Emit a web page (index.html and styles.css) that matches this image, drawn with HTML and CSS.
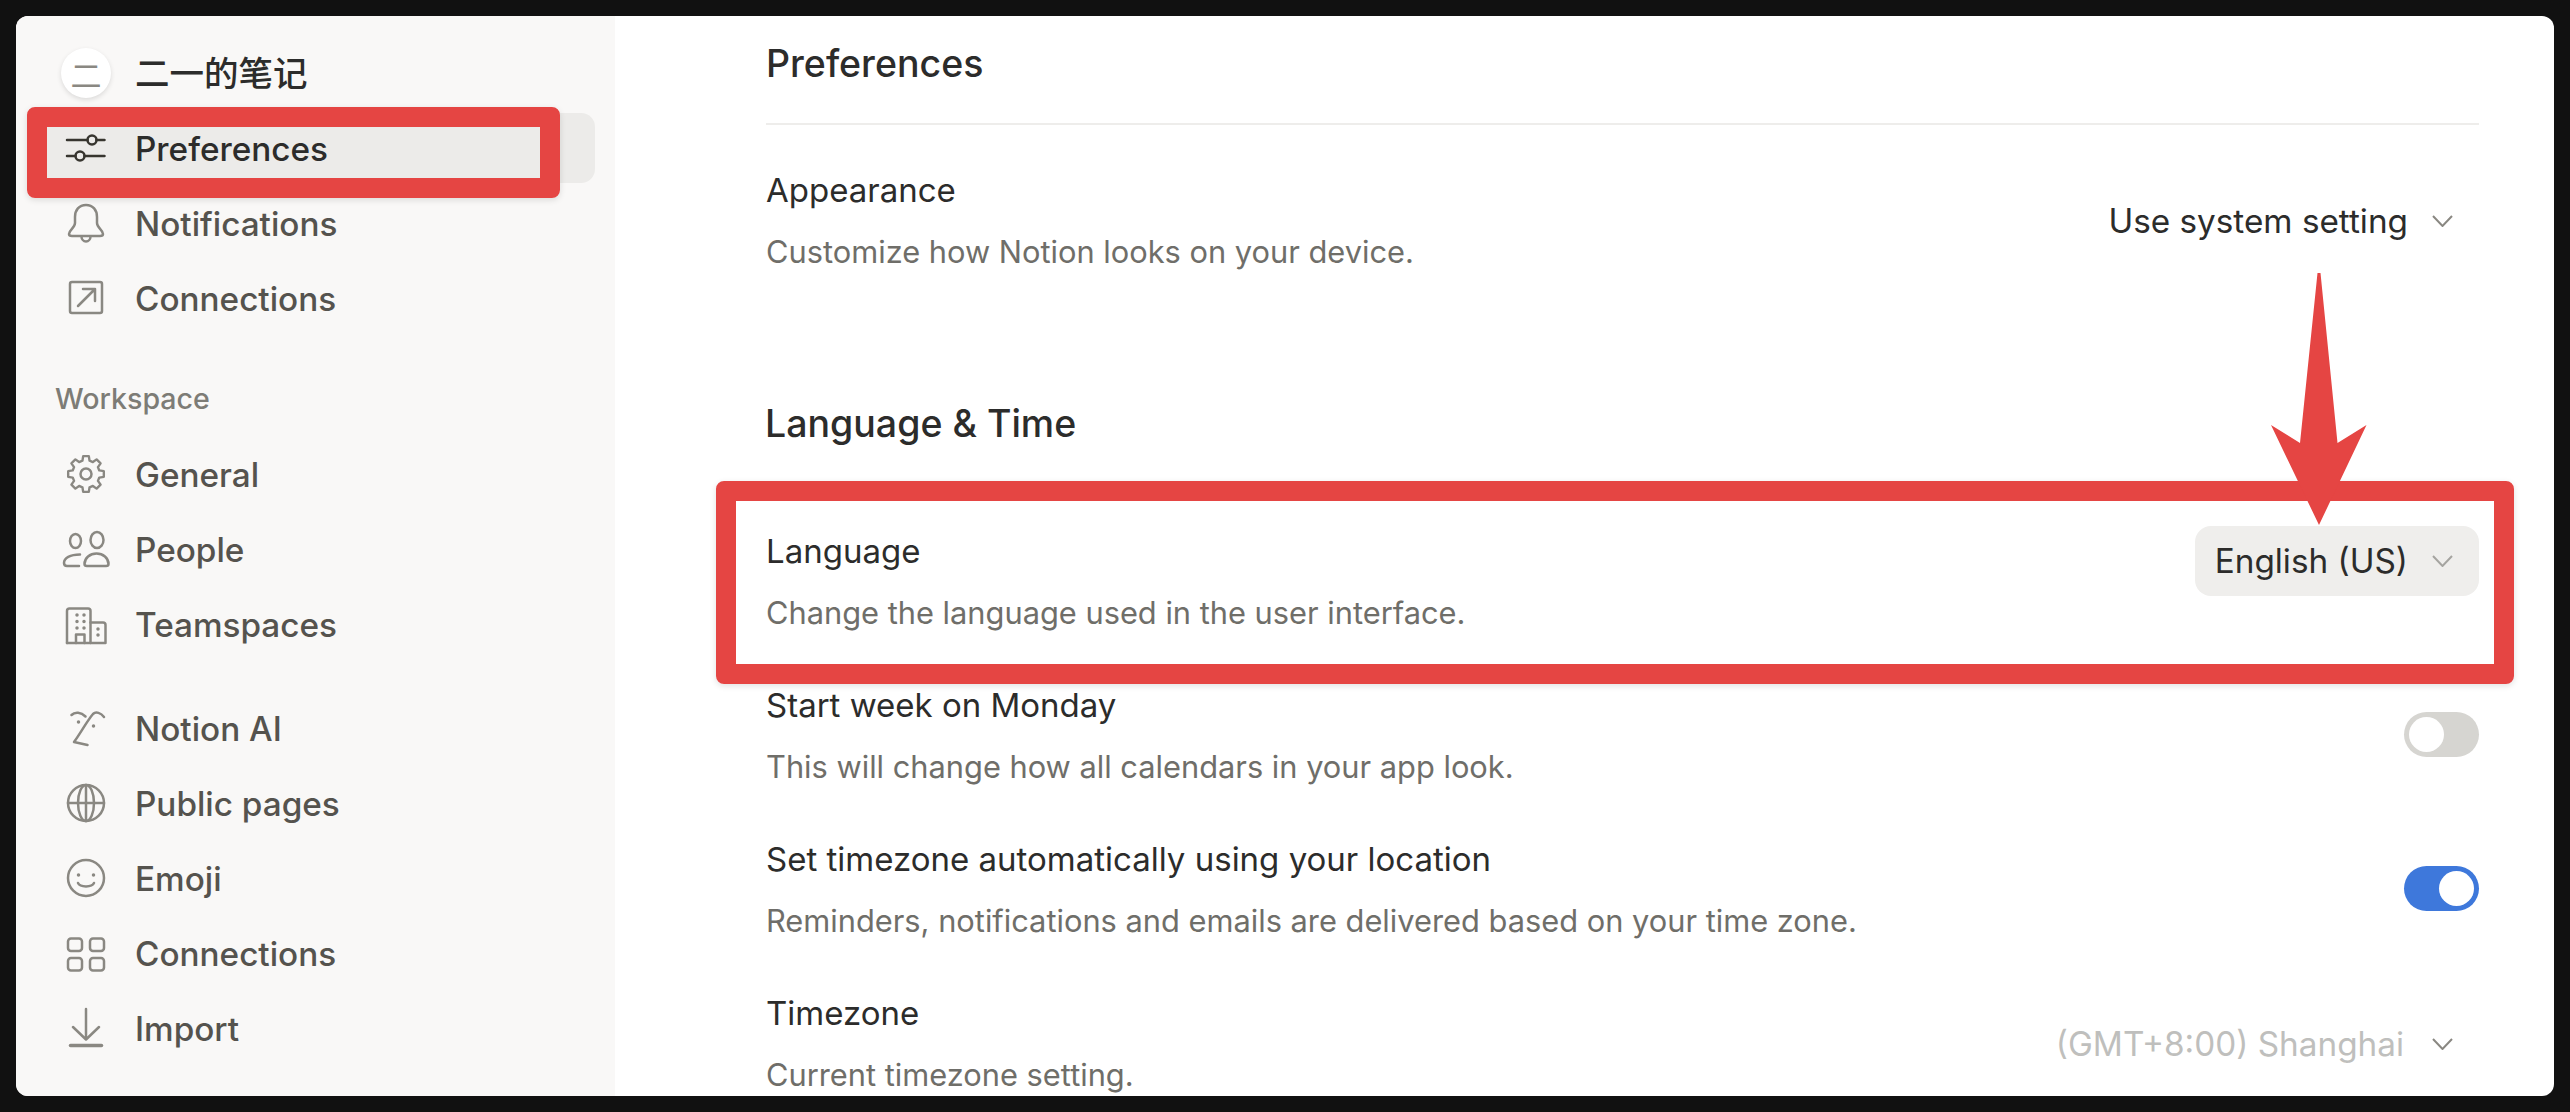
FILE: index.html
```html
<!DOCTYPE html>
<html lang="en">
<head>
    <meta charset="UTF-8">
    <meta name="viewport" content="width=device-width, initial-scale=1.0">
    <title>Settings</title>
    <link rel="stylesheet" href="styles.css">
</head>
<body>
    <div class="window">
        <div class="sidebar">
            <div class="nav-row workspace-row">
                <div class="nav-icon"><span class="avatar">二</span></div>
                <span class="workspace-name">二一的笔记</span>
            </div>

            <div class="nav-row active">
                <div class="nav-icon">
                    <svg viewBox="0 0 52 52"><path d="M7 18H27.5M36.5 18H44.5M7 34H15.5M24.5 34H44.5"/><circle cx="32" cy="18" r="4.5"/><circle cx="20" cy="34" r="4.5"/></svg>
                </div>
                <span>Preferences</span>
            </div>
            <div class="nav-row">
                <div class="nav-icon">
                    <svg viewBox="0 0 52 52"><path d="M26 8C19 8 15 13 15 20V26C15 31 9 33 9 37C9 38.5 10 39 12 39H40C42 39 43 38.5 43 37C43 33 37 31 37 26V20C37 13 33 8 26 8Z"/><path d="M21.5 39.5A4.5 5 0 0 0 30.5 39.5"/></svg>
                </div>
                <span>Notifications</span>
            </div>
            <div class="nav-row">
                <div class="nav-icon">
                    <svg viewBox="0 0 52 52"><rect x="10" y="10" width="32" height="31" rx="2"/><path d="M18 34L35 17M23 17H35V29"/></svg>
                </div>
                <span>Connections</span>
            </div>

            <div class="nav-label">Workspace</div>

            <div class="nav-row">
                <div class="nav-icon">
                    <svg viewBox="0 0 52 52"><polygon transform="translate(26 26) scale(.95)" points="-2.97,-18.77 2.97,-18.77 3.75,-14 7.25,-12.56 11.17,-15.37 15.37,-11.17 12.56,-7.25 14,-3.75 18.77,-2.97 18.77,2.97 14,3.75 12.56,7.25 15.37,11.17 11.17,15.37 7.25,12.56 3.75,14 2.97,18.77 -2.97,18.77 -3.75,14 -7.25,12.56 -11.17,15.37 -15.37,11.17 -12.56,7.25 -14,3.75 -18.77,2.97 -18.77,-2.97 -14,-3.75 -12.56,-7.25 -15.37,-11.17 -11.17,-15.37 -7.25,-12.56 -3.75,-14"/><circle cx="26" cy="26" r="5.5"/></svg>
                </div>
                <span>General</span>
            </div>
            <div class="nav-row">
                <div class="nav-icon">
                    <svg viewBox="0 0 52 52"><ellipse cx="15.5" cy="18" rx="5.5" ry="7"/><ellipse cx="37" cy="17" rx="6.5" ry="8"/><path d="M24.5 41C24.5 35 30 30.5 36.5 30.5C43 30.5 48.5 35 48.5 41C48.5 42.5 47.5 43 46 43H27C25.5 43 24.5 42.5 24.5 41Z"/><path d="M20 31.5C10 31.5 4 35 4 40C4 42 5 43 7 43H19"/></svg>
                </div>
                <span>People</span>
            </div>
            <div class="nav-row">
                <div class="nav-icon">
                    <svg viewBox="0 0 52 52"><path d="M7 45V13C7 11.5 8 10.5 9.5 10.5H28C29.5 10.5 30.5 11.5 30.5 13V45"/><path d="M30.5 24.5H43C44.5 24.5 45.5 25.5 45.5 27V45H7"/><path d="M16 45V36.5H24.5V45"/><path class="dots" d="M17 17V17.1M24 17V17.1M17 23.5V23.6M24 23.5V23.6M17 30V30.1M24 30V30.1M38 31V31.1M38 37V37.1"/></svg>
                </div>
                <span>Teamspaces</span>
            </div>

            <div class="nav-row group-start">
                <div class="nav-icon">
                    <svg viewBox="0 0 52 52"><path d="M11.5 13C15 9.5 21 10 25.5 14.5"/><path d="M44 15C41 11 36 9 33 12C27 19 20 32 14 40L27.5 43"/><path class="dots" d="M18.5 20V20.1M33.5 24V24.1"/></svg>
                </div>
                <span>Notion AI</span>
            </div>
            <div class="nav-row">
                <div class="nav-icon">
                    <svg viewBox="0 0 52 52"><circle cx="26" cy="26" r="18"/><ellipse cx="26" cy="26" rx="8" ry="18"/><path d="M26 8V44M8 26H44"/></svg>
                </div>
                <span>Public pages</span>
            </div>
            <div class="nav-row">
                <div class="nav-icon">
                    <svg viewBox="0 0 52 52"><circle cx="26" cy="26" r="18"/><path class="dots" d="M18.5 23V23.1M33.5 23V23.1"/><path d="M18 31C20 35.5 32 35.5 34 31"/></svg>
                </div>
                <span>Emoji</span>
            </div>
            <div class="nav-row">
                <div class="nav-icon">
                    <svg viewBox="0 0 52 52"><rect x="8" y="11.5" width="14" height="12.5" rx="3"/><rect x="30" y="11.5" width="14" height="12.5" rx="3"/><rect x="8" y="31" width="14" height="12.5" rx="3"/><rect x="30" y="31" width="14" height="12.5" rx="3"/></svg>
                </div>
                <span>Connections</span>
            </div>
            <div class="nav-row">
                <div class="nav-icon">
                    <svg viewBox="0 0 52 52"><path d="M26 7V37M13 25L26 37.5L39 25"/><path class="thick" d="M10.5 43.5H41.5"/></svg>
                </div>
                <span>Import</span>
            </div>
        </div>

        <div class="main">
            <h2 class="page-title">Preferences</h2>

            <div class="setting">
                <div class="setting-text">
                    <div class="setting-name">Appearance</div>
                    <div class="setting-desc">Customize how Notion looks on your device.</div>
                </div>
                <div class="select">
                    <span>Use system setting</span>
                    <svg class="chevron" viewBox="0 0 21 12"><path d="M1 1L10.5 11L20 1"/></svg>
                </div>
            </div>

            <h2 class="section-title">Language &amp; Time</h2>

            <div class="setting">
                <div class="setting-text">
                    <div class="setting-name">Language</div>
                    <div class="setting-desc">Change the language used in the user interface.</div>
                </div>
                <div class="select open">
                    <span>English (US)</span>
                    <svg class="chevron" viewBox="0 0 21 12"><path d="M1 1L10.5 11L20 1"/></svg>
                </div>
            </div>
            <div class="setting">
                <div class="setting-text">
                    <div class="setting-name">Start week on Monday</div>
                    <div class="setting-desc">This will change how all calendars in your app look.</div>
                </div>
                <div class="toggle"><div class="knob"></div></div>
            </div>
            <div class="setting">
                <div class="setting-text">
                    <div class="setting-name">Set timezone automatically using your location</div>
                    <div class="setting-desc">Reminders, notifications and emails are delivered based on your time zone.</div>
                </div>
                <div class="toggle on"><div class="knob"></div></div>
            </div>
            <div class="setting">
                <div class="setting-text">
                    <div class="setting-name">Timezone</div>
                    <div class="setting-desc">Current timezone setting.</div>
                </div>
                <div class="select disabled">
                    <span>(GMT+8:00) Shanghai</span>
                    <svg class="chevron" viewBox="0 0 21 12"><path d="M1 1L10.5 11L20 1"/></svg>
                </div>
            </div>
        </div>

        <!-- red annotations drawn over the screenshot -->
        <div class="mark mark-nav"></div>
        <div class="mark mark-language"></div>
        <svg class="arrow" viewBox="0 0 96 252"><polygon points="46.5,0 49.5,0 66.5,170 95.5,152 48,252 0,152 29,170"/></svg>
    </div>
</body>
</html>
```

FILE: styles.css
```css
body, html {
    margin: 0;
    padding: 0;
    height: 100%;
}

body {
    background: #111111;
    font-family: 'Inter', 'Noto Sans CJK SC', sans-serif;
    padding: 16px;
    box-sizing: border-box;
}

.window {
    position: relative;
    display: flex;
    height: 1080px;
    background: #ffffff;
    border-radius: 12px;
    overflow: hidden;
}

/* sidebar */
.sidebar {
    width: 599px;
    flex-shrink: 0;
    box-sizing: border-box;
    padding: 22px 20px 0;
    background: #F9F8F7;
    display: flex;
    flex-direction: column;
    gap: 5px;
}

.nav-row {
    display: flex;
    align-items: center;
    flex-shrink: 0;
    height: 70px;
    padding-left: 24px;
    border-radius: 14px;
    font-size: 33.3px;
    font-weight: 500;
    color: #55534E;
}

.nav-row > span {
    padding-top: 2px;
}

.nav-row.active {
    background: #ECEBE9;
    color: #2C2C2B;
}

.workspace-row {
    color: #2C2C2B;
}

.workspace-name {
    font-size: 34.5px;
    padding-bottom: 6px;
}

.group-start {
    margin-top: 29px;
}

.nav-icon {
    width: 52px;
    height: 52px;
    margin-right: 23px;
    display: flex;
    justify-content: center;
    align-items: center;
    flex-shrink: 0;
}

.nav-icon svg {
    width: 52px;
    height: 52px;
    fill: none;
    stroke: #8A8882;
    stroke-width: 2.5;
    stroke-linecap: round;
    stroke-linejoin: round;
}

.active .nav-icon svg {
    stroke: #37352F;
}

.nav-icon .dots {
    stroke-width: 3.5;
}

.nav-icon .thick {
    stroke-width: 3.5;
}

.avatar {
    width: 50px;
    height: 50px;
    border-radius: 50%;
    background: #ffffff;
    box-shadow: 0 2px 5px rgba(0, 0, 0, 0.12);
    display: flex;
    justify-content: center;
    align-items: center;
    font-size: 31px;
    font-weight: 400;
    color: #8A8882;
}

.nav-label {
    height: 40px;
    line-height: 40px;
    margin: 41px 0 15px 19px;
    font-size: 28.6px;
    font-weight: 500;
    color: #7D7C76;
}

/* main panel */
.main {
    flex: 1;
    min-width: 0;
    padding: 22px 75px 0 151px;
    color: #2C2C2B;
}

.page-title, .section-title {
    height: 48px;
    line-height: 48px;
    font-size: 37.5px;
    font-weight: 500;
}

.page-title {
    box-sizing: content-box;
    margin: 2px 0 45px;
    padding-bottom: 35px;
    border-bottom: 2px solid #EEEDEB;
}

.section-title {
    margin: 128px 0 83px -1px;
}

.setting {
    display: flex;
    justify-content: space-between;
    align-items: center;
    margin-bottom: 52px;
}

.setting-name {
    height: 40px;
    line-height: 40px;
    font-size: 33px;
    font-weight: 400;
    margin-bottom: 22px;
}

.setting-desc {
    height: 40px;
    line-height: 40px;
    font-size: 30.8px;
    color: #6F6E69;
}

.select {
    display: flex;
    align-items: center;
    height: 70px;
    box-sizing: border-box;
    padding: 0 26px 0 20px;
    border-radius: 16px;
    font-size: 33.3px;
}

.select.open {
    background: #EFEEEC;
    align-self: flex-start;
    margin-top: -5px;
}

.select.disabled {
    color: #BFBFBD;
}

.chevron {
    width: 21px;
    height: 12px;
    margin-left: 24px;
    fill: none;
    stroke: #8A8882;
    stroke-width: 2;
}

.select.open .chevron {
    stroke: #A5A4A0;
}

.select.disabled .chevron {
    margin-left: 28px;
}

.toggle {
    width: 75px;
    height: 45px;
    box-sizing: border-box;
    padding: 5px;
    border-radius: 23px;
    background: #D6D5D1;
    margin-bottom: 3px;
}

.toggle.on {
    background: #3E78DB;
    display: flex;
    justify-content: flex-end;
}

.knob {
    width: 35px;
    height: 35px;
    border-radius: 50%;
    background: #ffffff;
}

/* annotations */
.mark {
    position: absolute;
    box-sizing: border-box;
    border: 20px solid #E54543;
    border-radius: 8px;
    box-shadow: 0 2px 6px rgba(0, 0, 0, 0.12);
}

.mark-nav {
    left: 11px;
    top: 91px;
    width: 533px;
    height: 91px;
}

.mark-language {
    left: 700px;
    top: 465px;
    width: 1798px;
    height: 203px;
}

.arrow {
    position: absolute;
    left: 2255px;
    top: 257px;
    width: 96px;
    height: 252px;
    fill: #E54543;
}
```
